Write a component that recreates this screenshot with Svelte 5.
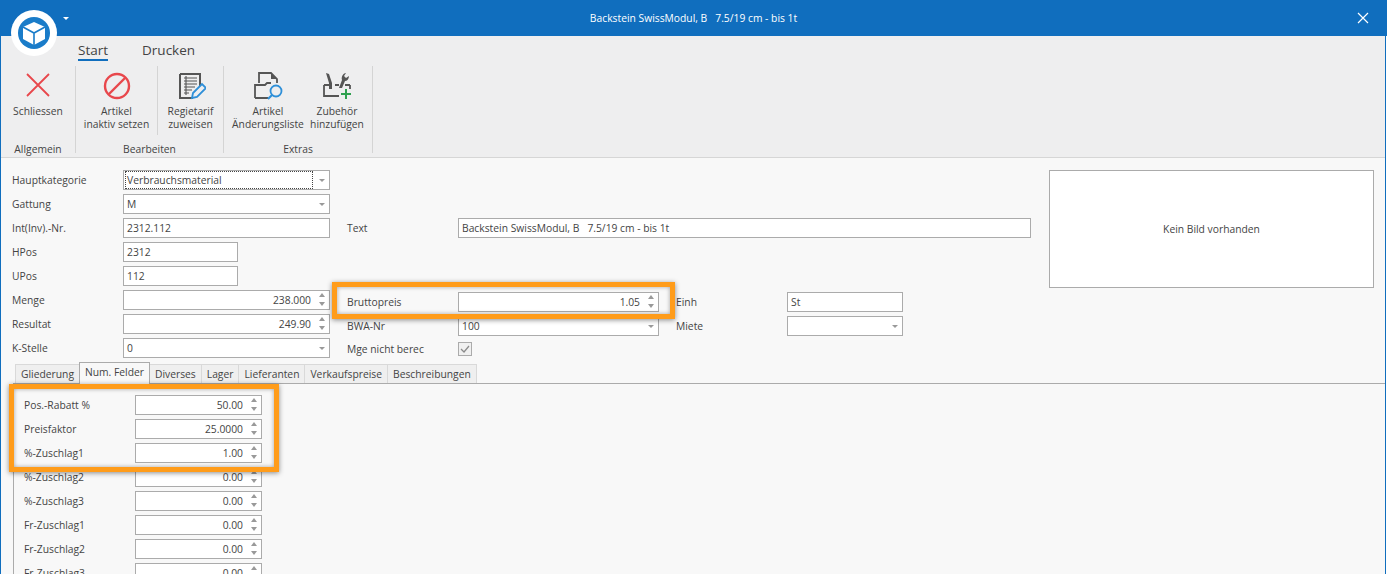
<script>
	const topLeft = [
		{ label: 'Hauptkategorie', value: 'Verbrauchsmaterial', kind: 'combo', focus: true },
		{ label: 'Gattung', value: 'M', kind: 'combo' },
		{ label: 'Int(Inv).-Nr.', value: '2312.112', kind: 'text' },
		{ label: 'HPos', value: '2312', kind: 'text', short: true },
		{ label: 'UPos', value: '112', kind: 'text', short: true },
		{ label: 'Menge', value: '238.000', kind: 'spin' },
		{ label: 'Resultat', value: '249.90', kind: 'spin' },
		{ label: 'K-Stelle', value: '0', kind: 'combo' }
	];

	const tabs = ['Gliederung', 'Num. Felder', 'Diverses', 'Lager', 'Lieferanten', 'Verkaufspreise', 'Beschreibungen'];

	const numFields = [
		['Pos.-Rabatt %', '50.00'],
		['Preisfaktor', '25.0000'],
		['%-Zuschlag1', '1.00'],
		['%-Zuschlag2', '0.00'],
		['%-Zuschlag3', '0.00'],
		['Fr-Zuschlag1', '0.00'],
		['Fr-Zuschlag2', '0.00'],
		['Fr-Zuschlag3', '0.00']
	];
</script>

{#snippet arrow()}
	<svg class="arrow" width="6" height="3" viewBox="0 0 6 3"><path d="M0 0h6L3 3z" /></svg>
{/snippet}

{#snippet spin()}
	<span class="spin">
		<svg width="6" height="4" viewBox="0 0 6 4"><path d="M3 0l3 4H0z" /></svg>
		<svg width="6" height="4" viewBox="0 0 6 4"><path d="M0 0h6L3 4z" /></svg>
	</span>
{/snippet}

{#snippet field(value, kind, focus)}
	<div class="field" class:num={kind === 'spin'}>
		{#if focus}
			<span class="focus">{value}</span>
		{:else}
			<span>{value}</span>
		{/if}
		{#if kind === 'combo'}{@render arrow()}{/if}
		{#if kind === 'spin'}{@render spin()}{/if}
	</div>
{/snippet}

<div class="window">
	<header class="titlebar">
		<span class="title">Backstein SwissModul, B   7.5/19 cm - bis 1t</span>
		<svg class="close" width="12" height="12" viewBox="0 0 12 12"><path d="M1 1l10 10M11 1L1 11" /></svg>
	</header>

	<div class="logo">
		<svg width="46" height="46" viewBox="0 0 46 46">
			<circle cx="23" cy="23" r="23" fill="#fff" />
			<circle cx="23" cy="23" r="16" fill="#1a7cc9" />
			<path d="M23 12l11 5v12l-11 6-11-6V17z" fill="#fff" />
			<path d="M12 17l11 6 11-6M23 23v12" fill="none" stroke="#1a7cc9" stroke-width="1.600" />
		</svg>
	</div>
	<svg class="qat" width="6" height="3" viewBox="0 0 6 3"><path d="M0 0h6L3 3z" /></svg>

	<div class="content">
		<nav class="ribbon-tabs">
			<span class="rtab active">Start</span>
			<span class="rtab">Drucken</span>
		</nav>

		<section class="ribbon">
			<div class="group" style="width:74px">
				<div class="buttons">
					<div class="rbtn" style="width:74px">
						<svg width="30" height="30" viewBox="0 0 30 30"><path d="M4 4l22 22M26 4L4 26" fill="none" stroke="#e8474c" stroke-width="1.800" /></svg>
						<span>Schliessen</span>
					</div>
				</div>
				<div class="glabel">Allgemein</div>
			</div>
			<div class="group" style="width:147px">
				<div class="buttons">
					<div class="rbtn sep" style="width:82px">
						<svg width="30" height="30" viewBox="0 0 30 30"><circle cx="15" cy="16" r="12" fill="none" stroke="#e8474c" stroke-width="2.400" /><path d="M7 24L23 8" stroke="#e8474c" stroke-width="2.400" /></svg>
						<span>Artikel<br />inaktiv setzen</span>
					</div>
					<div class="rbtn" style="width:65px">
						<svg width="30" height="30" viewBox="0 0 30 30">
							<path d="M4 4h20v12M17 28H4V4" fill="none" stroke="#555" stroke-width="2" />
							<path d="M8 8h13M8 11h13M8 14h13M8 17h11M8 20h8M8 23h5M10 6v19" stroke="#555" stroke-width="1.100" fill="none" />
							<path d="M16 28l1-5 9-9 4 4-9 9z" fill="#eeeeef" stroke="#2e8fd8" stroke-width="1.800" />
						</svg>
						<span>Regietarif<br />zuweisen</span>
					</div>
				</div>
				<div class="glabel">Bearbeiten</div>
			</div>
			<div class="group" style="width:148px">
				<div class="buttons">
					<div class="rbtn" style="width:78px;margin-left:5px">
						<svg width="30" height="30" viewBox="0 0 30 30">
							<path d="M6 13V3h12l6 6v4" fill="none" stroke="#555" stroke-width="1.800" />
							<path d="M18 3v6h6z" fill="#555" />
							<path d="M2 28V15h10l2-2h4M2 28h13" fill="none" stroke="#555" stroke-width="1.800" />
							<circle cx="23" cy="21" r="5.500" fill="#eeeeef" stroke="#2e8fd8" stroke-width="1.800" />
							<path d="M19 25l-4 4" stroke="#2e8fd8" stroke-width="2.200" />
						</svg>
						<span>Artikel<br />Änderungsliste</span>
					</div>
					<div class="rbtn" style="width:60px">
						<svg width="30" height="30" viewBox="0 0 30 30">
							<path d="M2 15v11h15M28 15v4M2 15h5M13 15h4M23 15h5" fill="none" stroke="#555" stroke-width="1.800" />
							<path d="M4 3l3 1 3 9v6H7v-6z" fill="#555" />
							<path d="M24 3l-2 3 2 2 3-2c0 3-2 5-4 5l-3 7h-3l3-8c-1-3 1-7 4-7z" fill="#555" />
							<path d="M24 19v10M19 24h10" stroke="#2ea04f" stroke-width="2" />
						</svg>
						<span>Zubehör<br />hinzufügen</span>
					</div>
				</div>
				<div class="glabel">Extras</div>
			</div>
		</section>

		<main class="body">
			<div class="top">
				<div class="col-left">
					{#each topLeft as row}
						<div class="row">
							<span class="lbl">{row.label}</span>
							<div class="slot" class:short={row.short}>{@render field(row.value, row.kind, row.focus)}</div>
						</div>
					{/each}
				</div>

				<div class="col-mid">
					<div class="row">
						<span class="lbl">Text</span>
						<div class="slot wide">{@render field('Backstein SwissModul, B   7.5/19 cm - bis 1t', 'text')}</div>
					</div>
					<div class="row price-row">
						<span class="lbl">Bruttopreis</span>
						<div class="slot mid">{@render field('1.05', 'spin')}</div>
						<span class="lbl side">Einh</span>
						<div class="slot unit">{@render field('St', 'text')}</div>
					</div>
					<div class="row">
						<span class="lbl">BWA-Nr</span>
						<div class="slot mid">{@render field('100', 'combo')}</div>
						<span class="lbl side">Miete</span>
						<div class="slot unit">{@render field('', 'combo')}</div>
					</div>
					<div class="row check-row">
						<span class="lbl">Mge nicht berec</span>
						<div class="check">
							<svg width="10" height="8" viewBox="0 0 10 8"><path d="M1 4l3 3 5-6" fill="none" stroke="#8a8a8a" stroke-width="1.300" /></svg>
						</div>
					</div>
				</div>

				<div class="picture">Kein Bild vorhanden</div>
			</div>

			<div class="tabstrip">
				{#each tabs as tab, i}
					<span class="tab" class:current={i === 1}>{tab}</span>
				{/each}
			</div>
			<div class="panel">
				{#each numFields as [label, value]}
					<div class="row">
						<span class="lbl">{label}</span>
						<div class="slot pf">{@render field(value, 'spin')}</div>
					</div>
				{/each}
			</div>
		</main>
	</div>

	<div class="mark mark-price"></div>
	<div class="mark mark-fields"></div>
</div>

<style>
	:global(body) {
		margin: 0;
		background: #fff;
	}

	.window {
		position: relative;
		width: 1387px;
		height: 574px;
		overflow: hidden;
		font-family: 'Open Sans', sans-serif;
		font-size: 10.300px;
		color: #444;
	}

	.titlebar {
		height: 36px;
		background: #106ebe;
		display: flex;
		align-items: center;
		justify-content: center;
		position: relative;
	}

	.title {
		color: #fff;
		white-space: pre;
	}

	.close {
		position: absolute;
		right: 18px;
		top: 12px;
		stroke: #fff;
		stroke-width: 1.200;
	}

	.logo {
		position: absolute;
		left: 11px;
		top: 10px;
		height: 46px;
	}

	.qat {
		position: absolute;
		left: 63px;
		top: 17px;
		fill: #fff;
	}

	.content {
		width: 1386px;
		height: 538px;
		box-sizing: border-box;
		border-left: 1px solid #106ebe;
		border-right: 1px solid #106ebe;
		background: #f8f8f8;
	}

	.ribbon-tabs {
		height: 30px;
		background: #eeeeef;
		display: flex;
		gap: 34px;
		padding-left: 77px;
		box-sizing: border-box;
	}

	.rtab {
		font-size: 13.500px;
		height: 25px;
		line-height: 28px;
	}

	.rtab.active {
		border-bottom: 2px solid #106ebe;
		height: 23px;
	}

	.ribbon {
		height: 91px;
		background: #eeeeef;
		border-bottom: 1px solid #d6d6d6;
		display: flex;
	}

	.group {
		height: 87px;
		border-right: 1px solid #d4d4d4;
		display: flex;
		flex-direction: column;
	}

	.buttons {
		height: 77px;
		flex: none;
		display: flex;
	}

	.rbtn {
		display: flex;
		flex-direction: column;
		align-items: center;
		text-align: center;
		line-height: 13px;
		height: 69px;
		box-sizing: border-box;
		padding-top: 4px;
		white-space: nowrap;
	}

	.rbtn.sep {
		border-right: 1px solid #d4d4d4;
	}

	.rbtn span {
		margin-top: 5px;
	}

	.glabel {
		text-align: center;
		height: 10px;
		line-height: 12px;
	}

	.body {
		padding: 12px 0 0 11px;
	}

	.top {
		display: flex;
		height: 190px;
	}

	.col-left {
		width: 318px;
		display: flex;
		flex-direction: column;
		gap: 4px;
	}

	.col-mid {
		width: 719px;
		padding: 48px 0 0 17px;
		box-sizing: border-box;
		display: flex;
		flex-direction: column;
		gap: 4px;
	}

	.row {
		display: flex;
		height: 20px;
		align-items: center;
	}

	.price-row {
		margin-top: 50px;
	}

	.check-row {
		height: 18px;
	}

	.lbl {
		width: 111px;
		flex: none;
		white-space: nowrap;
	}

	.lbl.side {
		margin-left: 17px;
	}

	.slot {
		width: 207px;
		flex: none;
	}

	.slot.short {
		width: 115px;
	}

	.slot.wide {
		width: 573px;
	}

	.slot.mid {
		width: 201px;
	}

	.slot.unit {
		width: 116px;
	}

	.slot.pf {
		width: 127px;
	}

	.field {
		height: 20px;
		box-sizing: border-box;
		border: 1px solid #ababab;
		background: #fff;
		display: flex;
		align-items: center;
		padding: 0 3px;
		position: relative;
		white-space: pre;
	}

	.field.num {
		justify-content: flex-end;
		padding-right: 18px;
	}

	.focus {
		outline: 1px dotted #444;
		width: calc(100% - 14px);
		margin-left: -1px;
		padding-left: 1px;
		line-height: 16px;
	}

	.arrow {
		position: absolute;
		right: 4px;
		top: 8px;
		fill: #999;
	}

	.spin {
		position: absolute;
		right: 4px;
		top: 2px;
		display: flex;
		flex-direction: column;
		gap: 5px;
		fill: #999;
	}

	.spin svg {
		display: block;
	}

	.check {
		width: 14px;
		height: 14px;
		box-sizing: border-box;
		border: 1px solid #ababab;
		background: #f0f0f0;
		display: flex;
		align-items: center;
		justify-content: center;
	}

	.picture {
		width: 325px;
		height: 118px;
		box-sizing: border-box;
		border: 1px solid #ababab;
		background: #fff;
		display: flex;
		align-items: center;
		justify-content: center;
	}

	.tabstrip {
		display: flex;
		height: 23px;
		padding-left: 4px;
		align-items: flex-end;
	}

	.tab {
		height: 19px;
		line-height: 19px;
		padding: 0 5px;
		box-sizing: border-box;
		border: 1px solid #d9d9d9;
		border-bottom: 0;
		background: #efefef;
		margin-left: -1px;
	}

	.tab.current {
		height: 22px;
		line-height: 19px;
		background: #f8f8f8;
		border-color: #ababab;
		margin-bottom: -1px;
		position: relative;
	}

	.panel {
		border-top: 1px solid #ababab;
		border-left: 1px solid #ababab;
		padding: 11px 0 0 10px;
		margin-left: 1px;
		display: flex;
		flex-direction: column;
		gap: 4px;
		height: 300px;
		box-sizing: border-box;
	}

	.mark {
		position: absolute;
		box-sizing: border-box;
		border: 5px solid #ff9c1a;
		box-shadow: 0 1px 5px rgba(0, 0, 0, 0.45), inset 0 0 4px rgba(0, 0, 0, 0.35);
	}

	.mark-price {
		left: 332px;
		top: 282px;
		width: 343px;
		height: 37px;
	}

	.mark-fields {
		left: 9px;
		top: 384px;
		width: 270px;
		height: 88px;
	}
</style>
